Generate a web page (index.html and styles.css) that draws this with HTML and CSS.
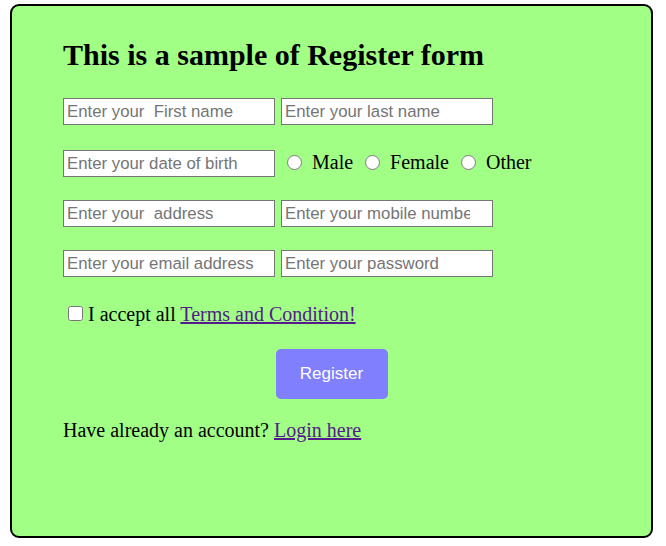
FILE: index.html
```html
<!DOCTYPE html>
<html lang="en">
<head>
  <meta charset="UTF-8">
  <meta name="viewport" content="width=device-width, initial-scale=1.0">
  <title>Register Form</title>
  <link rel="stylesheet" href="styles.css">
</head>
<body>
  <div class="container">
    <h2 class="title">This is a sample of Register form</h2>
    <form class="register-form">
      <div class="row first">
        <input type="text" placeholder="Enter your  First name">
        <input type="text" placeholder="Enter your last name">
      </div>
      <div class="row">
        <input type="text" placeholder="Enter your date of birth">
        <label class="choice"><input type="radio" name="gender"> Male</label>
        <label class="choice"><input type="radio" name="gender"> Female</label>
        <label class="choice"><input type="radio" name="gender"> Other</label>
      </div>
      <div class="row">
        <input type="text" placeholder="Enter your  address">
        <input type="text" class="mobile" placeholder="Enter your mobile number">
      </div>
      <div class="row">
        <input type="email" placeholder="Enter your email address">
        <input type="password" placeholder="Enter your password">
      </div>
      <div class="terms">
        <input type="checkbox">
        <span>I accept all <a href="#">Terms and Condition!</a></span>
      </div>
      <div class="actions">
        <button type="submit">Register</button>
      </div>
      <p class="login">Have already an account? <a href="#">Login here</a></p>
    </form>
  </div>
</body>
</html>
```

FILE: styles.css
```css
body {
  margin: 0;
  font-family: "Liberation Serif", "Times New Roman", serif;
  font-size: 20px;
  color: #000;
}
.container {
  box-sizing: border-box;
  height: 534px;
  margin: 4px 13px 8px 10px;
  padding: 0 51px;
  background-color: #a0ff84;
  border: 2px solid #000;
  border-radius: 9px;
}
.title {
  margin: 32px 0 26px;
  font-size: 30px;
  font-weight: bold;
}
.row {
  display: flex;
  align-items: baseline;
  gap: 6px;
  margin-bottom: 23px;
}
.row.first {
  margin-bottom: 25px;
}
input[type="text"],
input[type="email"],
input[type="password"] {
  box-sizing: border-box;
  width: 212px;
  height: 27px;
  padding: 1px 3px;
  margin: 0;
  border: 1px solid #767676;
  border-radius: 0;
  background: #fff;
  font-family: "Liberation Sans", Arial, sans-serif;
  font-size: 16.8px;
}
input.mobile {
  padding-right: 22px;
}
input::placeholder {
  color: #757575;
}
.choice {
  display: flex;
  align-items: baseline;
  margin-left: 6px;
  white-space: pre;
}
input[type="radio"],
input[type="checkbox"] {
  width: 15px;
  height: 15px;
  margin: 0 5px 0 0;
}
.choice input[type="radio"] {
  position: relative;
  top: 1px;
}
.terms {
  display: flex;
  align-items: baseline;
  margin-top: 26px;
}
.terms input[type="checkbox"] {
  margin: 0 5px 0 5px;
}
a {
  color: #551a8b;
}
.actions {
  display: flex;
  justify-content: center;
  margin-top: 23px;
}
button {
  width: 112px;
  height: 50px;
  border: none;
  border-radius: 5px;
  background-color: #8080ff;
  color: #fff;
  font-family: "Liberation Sans", Arial, sans-serif;
  font-size: 17px;
  cursor: pointer;
}
.login {
  margin: 20px 0 0;
}
```
